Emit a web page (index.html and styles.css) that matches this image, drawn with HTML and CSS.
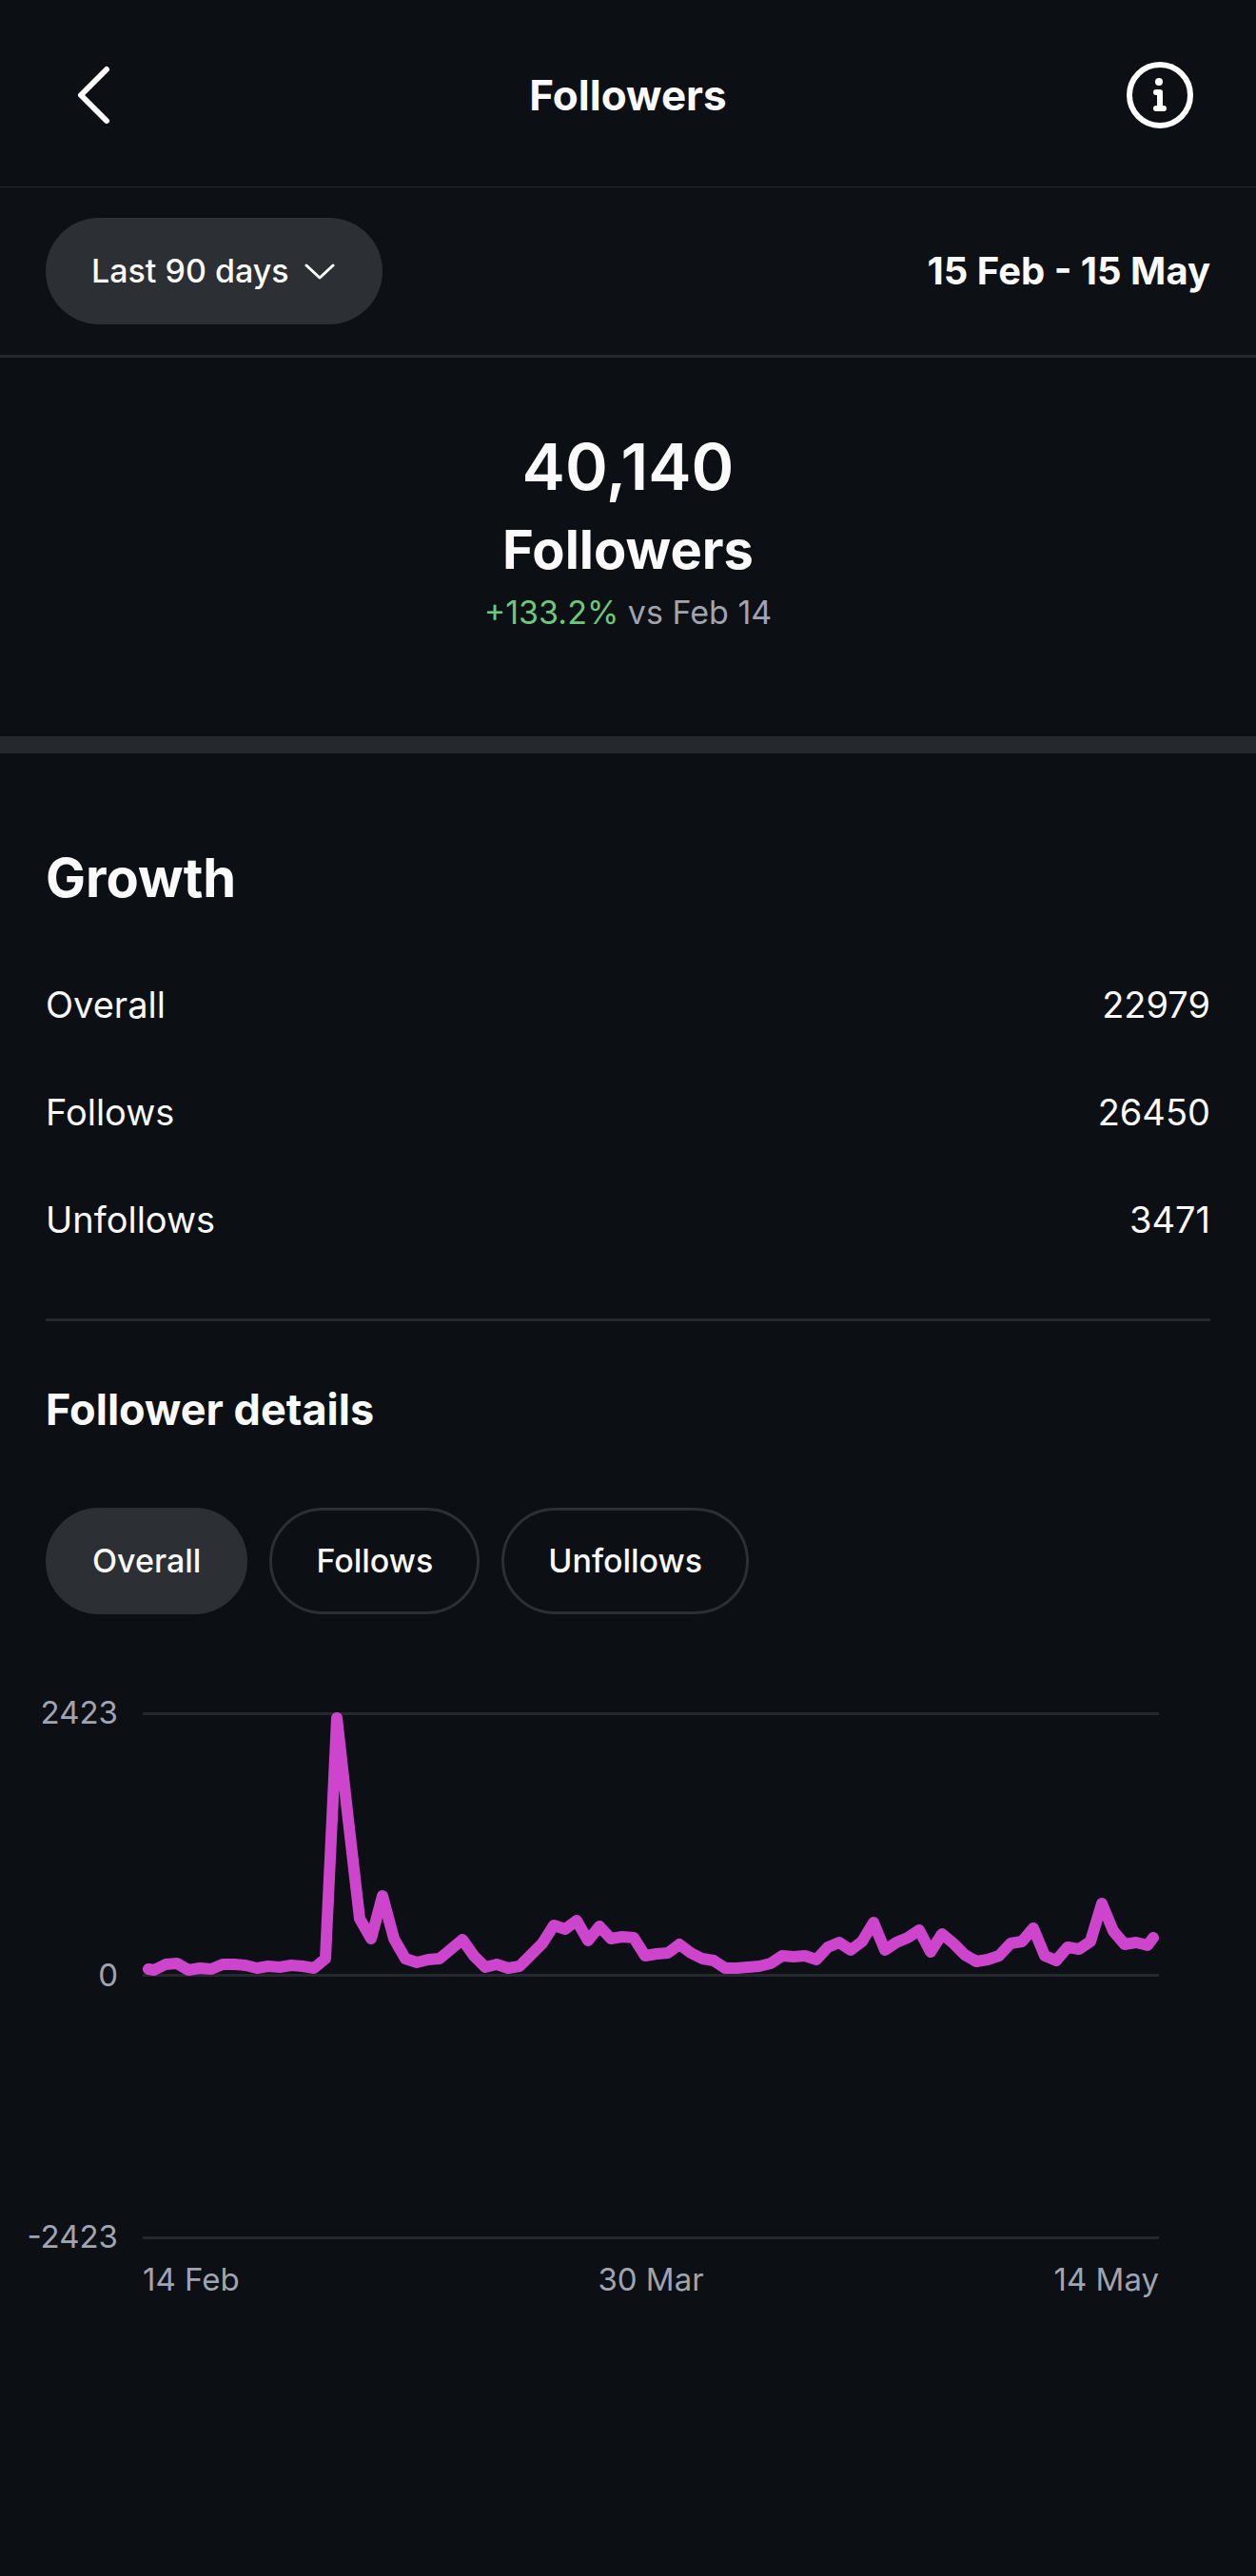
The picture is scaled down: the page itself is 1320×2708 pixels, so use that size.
FILE: index.html
```html
<!DOCTYPE html>
<html lang="en">
<head>
  <meta charset="UTF-8">
  <meta name="viewport" content="width=device-width, initial-scale=1.0">
  <title>Followers</title>
  <link rel="stylesheet" href="styles.css">
</head>
<body>

  <!-- Top bar -->
  <header>
    <button class="icon-btn" aria-label="Back">
      <svg width="72" height="72" viewBox="0 0 72 72" fill="none" stroke="#fff" stroke-width="6" stroke-linecap="round" stroke-linejoin="round">
        <path d="M48 9 L21 36 L48 63"/>
      </svg>
    </button>
    <h1>Followers</h1>
    <button class="icon-btn" aria-label="Info">
      <svg width="72" height="72" viewBox="0 0 72 72" fill="none" stroke="#fff" stroke-linecap="round" stroke-linejoin="round">
        <circle cx="35" cy="36" r="32" stroke-width="6"/>
        <circle cx="34" cy="22" r="4" fill="#fff" stroke="none"/>
        <path d="M31 33 H35 V50 M31 50 H39" stroke-width="6"/>
      </svg>
    </button>
  </header>

  <!-- Period filter -->
  <div class="period">
    <div class="period-select">
      <select aria-label="Period">
        <option>Last 90 days</option>
        <option>Last 30 days</option>
      </select>
      <svg width="32" height="18" viewBox="0 0 32 18" fill="none" stroke="#fff" stroke-width="3" stroke-linecap="round" stroke-linejoin="round">
        <path d="M2 2 L16 15 L30 2"/>
      </svg>
    </div>
    <span class="dates">15 Feb - 15 May</span>
  </div>

  <!-- Total -->
  <section class="summary">
    <div class="total">40,140</div>
    <h2>Followers</h2>
    <p><span class="up">+133.2%</span> vs Feb 14</p>
  </section>

  <main>
    <section class="growth">
      <h2>Growth</h2>
      <table>
        <tr><th scope="row">Overall</th><td>22979</td></tr>
        <tr><th scope="row">Follows</th><td>26450</td></tr>
        <tr><th scope="row">Unfollows</th><td>3471</td></tr>
      </table>
    </section>

    <section class="details">
      <h3>Follower details</h3>
      <div class="tabs">
        <button class="active">Overall</button>
        <button>Follows</button>
        <button>Unfollows</button>
      </div>
    </section>
  </main>

  <!-- Daily chart -->
  <div class="chart">
    <div class="y-axis">
      <span>2423</span>
      <span>0</span>
      <span>-2423</span>
    </div>
    <svg class="plot" viewBox="0 0 1068 554" fill="none">
      <g fill="#25282d">
        <rect x="0" y="0" width="1068" height="3"/>
        <rect x="0" y="275" width="1068" height="3"/>
        <rect x="0" y="551" width="1068" height="3"/>
      </g>
      <polyline class="line" points="6,270 12,271 24,265 36,264 48,271 60,269 72,270 84,265 96,265 108,266 120,269 132,267 144,268 156,266 168,267 180,269 192,259
        204,6 216,113 228,217 240,238 252,193 264,238 276,259 288,263 300,260 312,259 324,249 336,239 348,256 360,268 372,265 384,269 396,267 408,255 420,243
        432,224 444,228 456,219 468,240 480,225 492,238 504,236 516,237 528,256 540,254 552,253 564,244 576,253 588,259 600,261 612,269 624,269 636,268
        648,267 660,264 672,256 684,257 696,256 708,260 720,247 732,242 744,250 756,241 768,221 780,250 792,242 804,237 816,229 828,252 840,233 852,243
        864,255 876,262 888,260 900,256 912,243 924,241 936,227 948,256 960,261 972,247 984,249 996,241 1008,201 1020,230 1032,244 1044,242 1056,245 1062,237"/>
    </svg>
    <div class="x-axis">
      <span>14 Feb</span>
      <span>30 Mar</span>
      <span>14 May</span>
    </div>
  </div>

</body>
</html>
```

FILE: styles.css
```css
* {
  box-sizing: border-box;
}

body {
  margin: 0;
  min-height: 100vh;
  font-family: Inter, "Liberation Sans", sans-serif;
  font-size: 38px;
  line-height: 48px;
  background-color: #0c0f14;
  color: #fafafa;
}

h1,
h2,
h3,
p {
  margin: 0;
}

button,
select {
  font: inherit;
  color: inherit;
  border: none;
  background: none;
  cursor: pointer;
}

/* Top bar */
header {
  display: flex;
  align-items: center;
  justify-content: space-between;
  padding: 64px 64px 60px;
  border-bottom: 1px solid #25282d;
}

header h1 {
  font-size: 44px;
  font-weight: 700;
}

.icon-btn {
  padding: 0;
  height: 72px;
}

.icon-btn svg {
  display: block;
}

/* Period filter */
.period {
  display: flex;
  align-items: center;
  justify-content: space-between;
  padding: 32px 48px;
  background-color: #0d1014;
  border-bottom: 3px solid #25282d;
}

.period-select {
  position: relative;
}

.period-select select {
  appearance: none;
  height: 112px;
  padding: 0 98px 0 48px;
  border-radius: 56px;
  background-color: #2c2f33;
  font-size: 34px;
  font-weight: 500;
}

.period-select svg {
  position: absolute;
  right: 50px;
  top: 48px;
  pointer-events: none;
}

.dates {
  font-size: 40px;
  font-weight: 700;
}

/* Total */
.summary {
  padding: 68px 48px 106px;
  text-align: center;
  border-bottom: 18px solid #25282d;
}

.total {
  font-size: 68px;
  line-height: 92px;
  font-weight: 600;
}

h2 {
  font-size: 56px;
  line-height: 84px;
  font-weight: 700;
}

.summary p {
  font-size: 34px;
  color: #a0a4b0;
}

.summary .up {
  color: #6cc87a;
}

/* Growth */
main {
  padding: 0 48px;
}

.growth {
  padding: 89px 0 48px;
  border-bottom: 3px solid #25282d;
}

.growth table {
  width: 100%;
  margin-top: 34px;
  border-collapse: collapse;
}

.growth th,
.growth td {
  height: 113px;
  padding: 0;
  text-align: left;
  font-weight: 400;
}

.growth td {
  text-align: right;
}

/* Follower details */
.details h3 {
  margin-top: 69px;
  font-size: 45px;
  font-weight: 700;
}

.tabs {
  display: flex;
  gap: 23px;
  margin-top: 79px;
}

.tabs button {
  height: 112px;
  padding: 0 46px;
  border: 3px solid #2c2f33;
  border-radius: 56px;
  font-size: 34px;
  font-weight: 500;
}

.tabs button.active {
  background-color: #2c2f33;
}

/* Chart */
.chart {
  display: grid;
  grid-template-columns: 124px 1fr;
  column-gap: 26px;
  padding: 103px 102px 0 0;
  font-size: 33px;
  color: #a0a4b0;
}

.y-axis {
  display: flex;
  flex-direction: column;
  justify-content: space-between;
  margin: -24px 0 -21px;
  text-align: right;
}

.plot {
  display: block;
  width: 100%;
  height: auto;
}

.plot .line {
  stroke: #cc45cc;
  stroke-width: 12;
  stroke-linecap: round;
  stroke-linejoin: round;
}

.x-axis {
  grid-column: 2;
  display: grid;
  grid-template-columns: 1fr 1fr 1fr;
  margin-top: 18px;
  text-align: center;
}

.x-axis span:first-child {
  text-align: left;
}

.x-axis span:last-child {
  text-align: right;
}
```
